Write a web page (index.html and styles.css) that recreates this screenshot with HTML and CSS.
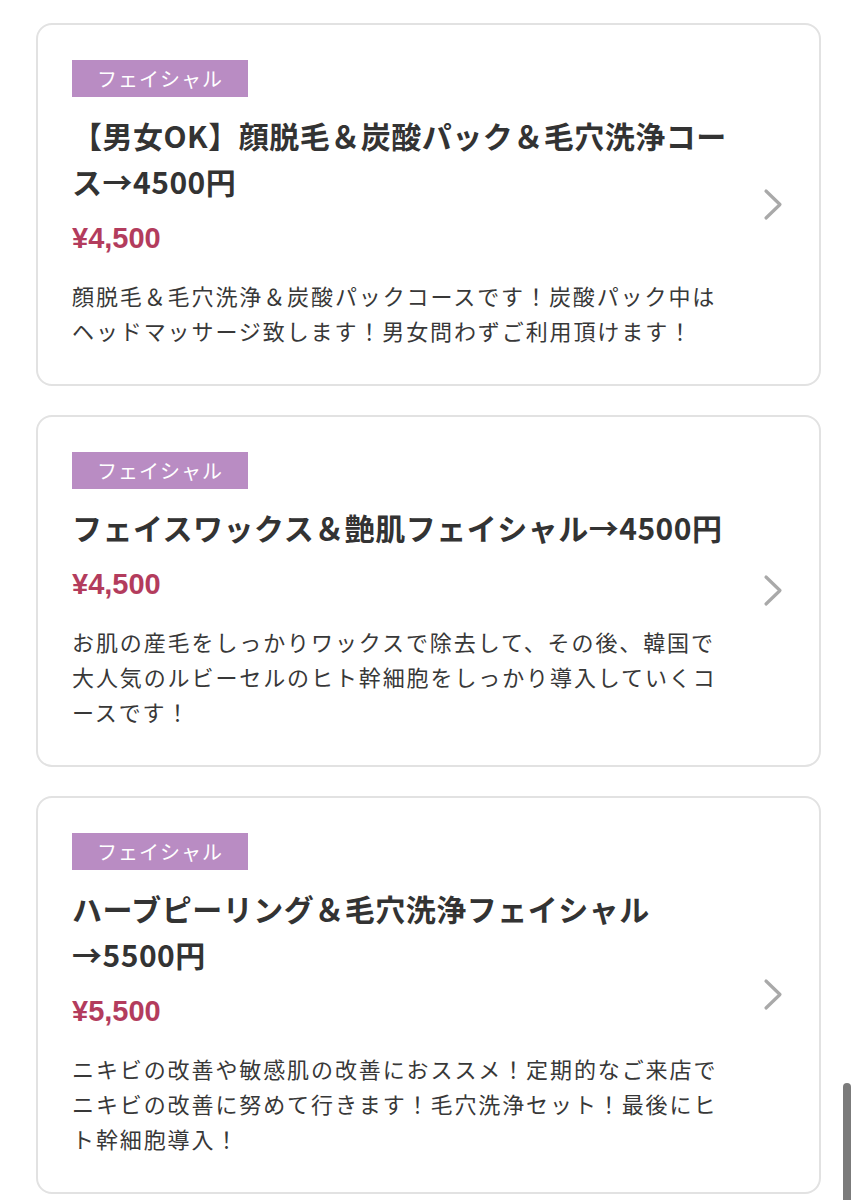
FILE: index.html
```html
<!DOCTYPE html>
<html lang="ja">
<head>
<meta charset="utf-8">
<title>メニュー</title>
<link rel="stylesheet" href="styles.css">
</head>
<body>
<main class="list">
  <a class="card" href="#">
    <div class="card-body">
      <span class="tag">フェイシャル</span>
      <h2 class="title">【男女OK】顔脱毛＆炭酸パック＆毛穴洗浄コース→4500円</h2>
      <p class="price">¥4,500</p>
      <p class="desc">顔脱毛＆毛穴洗浄＆炭酸パックコースです！炭酸パック中はヘッドマッサージ致します！男女問わずご利用頂けます！</p>
    </div>
    <svg class="chevron" viewBox="0 0 20 33" width="20" height="33" aria-hidden="true"><polyline points="3,3 17,16.5 3,30" fill="none" stroke="#a9a9a9" stroke-width="3.2" stroke-linecap="round" stroke-linejoin="round"/></svg>
  </a>
  <a class="card" href="#">
    <div class="card-body">
      <span class="tag">フェイシャル</span>
      <h2 class="title">フェイスワックス＆艶肌フェイシャル→4500円</h2>
      <p class="price">¥4,500</p>
      <p class="desc">お肌の産毛をしっかりワックスで除去して、その後、韓国で大人気のルビーセルのヒト幹細胞をしっかり導入していくコースです！</p>
    </div>
    <svg class="chevron" viewBox="0 0 20 33" width="20" height="33" aria-hidden="true"><polyline points="3,3 17,16.5 3,30" fill="none" stroke="#a9a9a9" stroke-width="3.2" stroke-linecap="round" stroke-linejoin="round"/></svg>
  </a>
  <a class="card" href="#">
    <div class="card-body">
      <span class="tag">フェイシャル</span>
      <h2 class="title">ハーブピーリング＆毛穴洗浄フェイシャル→5500円</h2>
      <p class="price">¥5,500</p>
      <p class="desc">ニキビの改善や敏感肌の改善におススメ！定期的なご来店でニキビの改善に努めて行きます！毛穴洗浄セット！最後にヒト幹細胞導入！</p>
    </div>
    <svg class="chevron" viewBox="0 0 20 33" width="20" height="33" aria-hidden="true"><polyline points="3,3 17,16.5 3,30" fill="none" stroke="#a9a9a9" stroke-width="3.2" stroke-linecap="round" stroke-linejoin="round"/></svg>
  </a>
</main>
<div class="scrollbar"></div>
</body>
</html>
```

FILE: styles.css
```css
html, body {
  background: #ffffff;
}
body {
  margin: 23px 36px 0 36px;
  font-family: "Noto Sans CJK JP", "Noto Sans", sans-serif;
  color: #333333;
  overflow: hidden;
}
.list {
  display: flex;
  flex-direction: column;
  gap: 29px;
}
.card {
  display: flex;
  align-items: center;
  gap: 29px;
  border: 2px solid #e2e2e2;
  border-radius: 16px;
  padding: 35px 36px 36px 34px;
  text-decoration: none;
  color: inherit;
  background: #ffffff;
}
.card-body {
  flex: 1;
  min-width: 0;
  display: flex;
  flex-direction: column;
  align-items: flex-start;
}
.tag {
  display: inline-flex;
  align-items: center;
  height: 37px;
  width: 176px;
  box-sizing: border-box;
  padding-left: 25px;
  background: #b98cc3;
  color: #ffffff;
  font-size: 20px;
  letter-spacing: 1px;
  line-height: 1;
}
.title {
  margin: 15px 0 0 0;
  font-size: 30px;
  font-weight: 700;
  line-height: 46px;
  letter-spacing: 0.5px;
  color: #333333;
}
.price {
  margin: 14px 0 0 0;
  font-family: "Liberation Sans", "Noto Sans CJK JP", sans-serif;
  font-size: 29px;
  font-weight: 700;
  line-height: 40px;
  color: #b33c5d;
}
.desc {
  margin: 20px 0 0 0;
  font-size: 22px;
  line-height: 35px;
  letter-spacing: 1.9px;
  color: #383838;
}
.chevron {
  flex: none;
  display: block;
}
.scrollbar {
  position: fixed;
  left: 843px;
  top: 1083px;
  width: 8px;
  height: 140px;
  border-radius: 4px;
  background: #7b7b7b;
}
```
